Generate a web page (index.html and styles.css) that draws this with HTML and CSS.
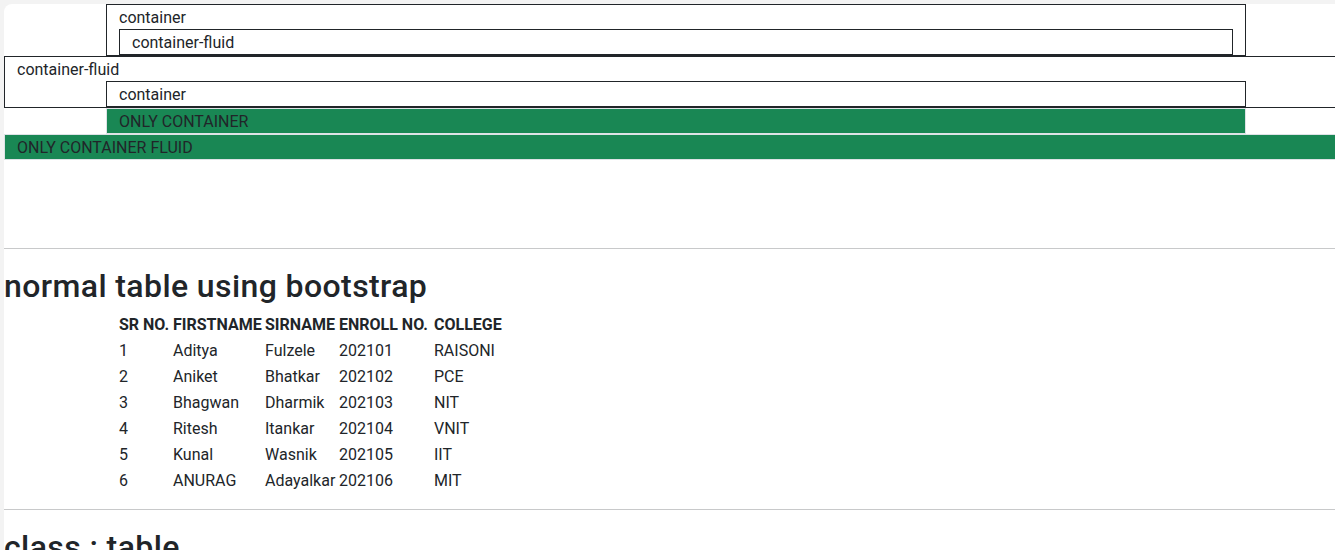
FILE: index.html
```html
<!DOCTYPE html>
<html lang="en">
<head>
<meta charset="utf-8">
<title>Bootstrap containers</title>
<link rel="stylesheet" href="styles.css">
</head>
<body>
<div class="page">
  <div class="container boxed">
    <span class="label">container</span>
    <div class="container-fluid boxed"><span class="label">container-fluid</span></div>
  </div>
  <div class="container-fluid boxed">
    <span class="label">container-fluid</span>
    <div class="container boxed"><span class="label">container</span></div>
  </div>
  <div class="container green"><span class="label">ONLY CONTAINER</span></div>
  <div class="container-fluid green"><span class="label">ONLY CONTAINER FLUID</span></div>
  <div class="spacer"></div>
  <hr class="rule">
  <h2 class="title">normal table using bootstrap</h2>
  <div class="container">
    <table class="plain">
      <thead>
        <tr><th class="c-sr">SR NO.</th><th class="c-first">FIRSTNAME</th><th class="c-sir">SIRNAME</th><th class="c-enroll">ENROLL NO.</th><th class="c-college">COLLEGE</th></tr>
      </thead>
      <tbody>
        <tr><td>1</td><td>Aditya</td><td>Fulzele</td><td>202101</td><td>RAISONI</td></tr>
        <tr><td>2</td><td>Aniket</td><td>Bhatkar</td><td>202102</td><td>PCE</td></tr>
        <tr><td>3</td><td>Bhagwan</td><td>Dharmik</td><td>202103</td><td>NIT</td></tr>
        <tr><td>4</td><td>Ritesh</td><td>Itankar</td><td>202104</td><td>VNIT</td></tr>
        <tr><td>5</td><td>Kunal</td><td>Wasnik</td><td>202105</td><td>IIT</td></tr>
        <tr><td>6</td><td>ANURAG</td><td>Adayalkar</td><td>202106</td><td>MIT</td></tr>
      </tbody>
    </table>
  </div>
  <hr class="rule">
  <h2 class="title">class : table</h2>
</div>
</body>
</html>
```
FILE: styles.css
```css
* { box-sizing: border-box; }
html, body {
  margin: 0;
  padding: 0;
  background: #f3f3f3;
  overflow: hidden;
  height: 550px;
}
body {
  padding: 4px 0 0 4px;
  font-family: Roboto, "Liberation Sans", sans-serif;
  font-size: 16px;
  line-height: 1.5;
  color: #212529;
}
.page {
  width: 1344px;
  min-height: 600px;
  background: #fff;
  border-top-left-radius: 8px;
}
.label {
  display: block;
  height: 24px;
  padding-top: 1px;
}
.container {
  width: 100%;
  max-width: 1140px;
  margin: 0 auto;
  padding: 0 12px;
}
.container-fluid {
  width: 100%;
  padding: 0 12px;
}
.boxed { border: 1px solid #212529; }
.green {
  background: #198754;
  border: 1px solid #dee2e6;
}
.spacer { height: 72px; }
.rule {
  margin: 16px 0;
  border: 0;
  border-top: 1px solid #c8c9ca;
  height: 0;
}
.title {
  margin: 0 0 6px;
  padding-top: 2px;
  font-size: 32px;
  font-weight: 500;
  line-height: 1.2;
  letter-spacing: 0.4px;
}
.plain {
  border-collapse: collapse;
}
.plain th, .plain td {
  padding: 2px 1px 0;
  height: 26px;
  text-align: left;
  vertical-align: top;
}
.plain th { font-weight: 700; }
.c-sr { width: 54px; }
.c-first { width: 92px; }
.c-sir { width: 74px; }
.c-enroll { width: 95px; }
```
